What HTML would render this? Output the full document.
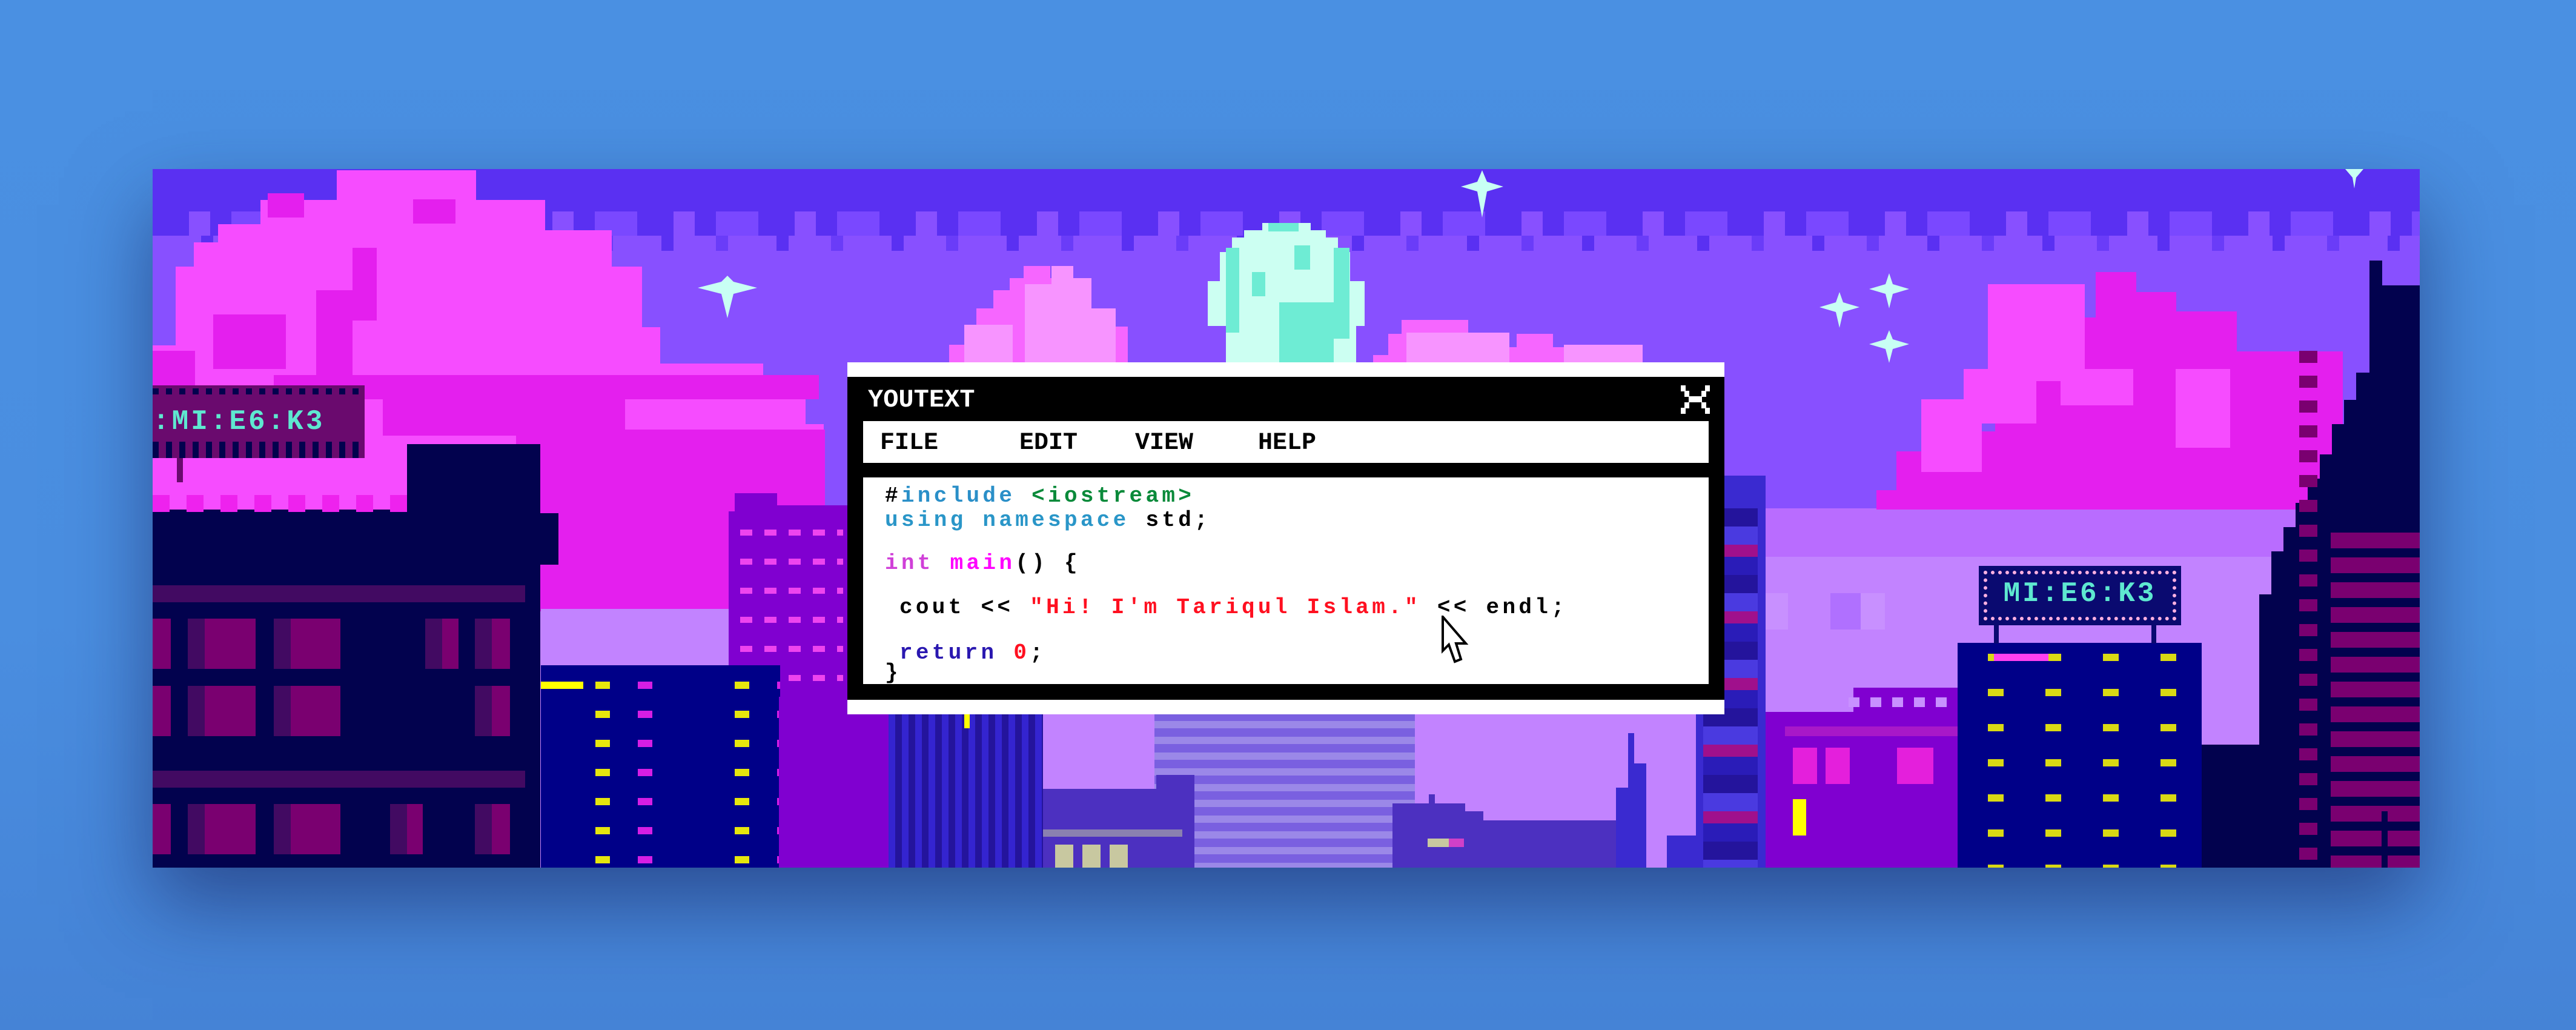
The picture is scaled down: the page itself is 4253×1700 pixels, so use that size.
<!DOCTYPE html>
<html><head><meta charset="utf-8">
<style>
*{margin:0;padding:0;box-sizing:border-box}
html,body{width:4253px;height:1700px;overflow:hidden}
body{position:relative;background:linear-gradient(180deg,#4a90e2 0%,#4a8ee0 60%,#4583d6 100%);font-family:"Liberation Mono",monospace}
.a{position:absolute}
#banner{left:252px;top:279px;width:3743px;height:1153px;overflow:hidden;
background:linear-gradient(180deg,#5a30f2 0 70px,#8850ff 70px 560px,#b96cff 560px 640px,#c283ff 640px);
box-shadow:0 60px 140px rgba(20,30,90,.55)}
.b{position:absolute}
.code{position:absolute;font-family:"Liberation Mono",monospace;font-size:36px;line-height:36px;letter-spacing:5.3px;white-space:pre;font-weight:bold;color:#000}
.menu{position:absolute;font-family:"Liberation Mono",monospace;font-size:40px;line-height:40px;font-weight:bold;color:#000}
</style></head><body>
<div id="banner" class="a">
<div class="b" style="left:0;top:70px;width:3743px;height:40px;background:repeating-linear-gradient(90deg,#5a30f2 0 60px,#8850ff 60px 95px,#5a30f2 95px 130px,#7a48ff 130px 200px)"></div>
<div class="b" style="left:0;top:110px;width:3743px;height:25px;background:repeating-linear-gradient(90deg,#8850ff 0 80px,#5a30f2 80px 100px,#8850ff 100px 170px,#6a3cf8 170px 190px)"></div>
<div class="b" style="left:1100px;top:700px;width:1800px;height:60px;background:repeating-linear-gradient(90deg,#c283ff 0 70px,#b070ff 70px 120px,#c890ff 120px 160px)"></div>

<div class="b" style="left:0;top:0;width:1200px;height:740px;background:#f64cff;clip-path:polygon(304px 2px,534px 2px,534px 51px,648px 51px,648px 101px,758px 101px,758px 161px,808px 161px,808px 261px,838px 261px,838px 321px,1008px 321px,1008px 361px,1078px 361px,1078px 421px,1108px 421px,1108px 726px,0 726px,0 291px,38px 291px,38px 161px,68px 161px,68px 121px,108px 121px,108px 91px,178px 91px,178px 51px,304px 51px)"></div>
<div class="b" style="left:270px;top:200px;width:60px;height:150px;background:#e41fee"></div>
<div class="b" style="left:190px;top:40px;width:60px;height:40px;background:#e41fee"></div>
<div class="b" style="left:430px;top:50px;width:70px;height:40px;background:#e41fee"></div>
<div class="b" style="left:330px;top:130px;width:40px;height:120px;background:#e41fee"></div>
<div class="b" style="left:100px;top:240px;width:120px;height:90px;background:#e41fee"></div>
<div class="b" style="left:200px;top:340px;width:900px;height:40px;background:#e41fee"></div>
<div class="b" style="left:380px;top:380px;width:400px;height:60px;background:#e41fee"></div>
<div class="b" style="left:600px;top:430px;width:510px;height:300px;background:#e41fee"></div>
<div class="b" style="left:0;top:300px;width:70px;height:110px;background:#e41fee"></div>
<div class="b" style="left:641px;top:726px;width:330px;height:93px;background:#c283ff"></div>

<div class="b" style="left:1300px;top:150px;width:500px;height:200px;background:#f666ff;clip-path:polygon(138px 10px,182px 10px,182px 30px,220px 30px,220px 50px,245px 50px,245px 80px,267px 80px,267px 110px,310px 110px,310px 200px,0 200px,0 180px,15px 180px,15px 140px,40px 140px,40px 110px,60px 110px,60px 80px,88px 80px,88px 50px,115px 50px,115px 30px,138px 30px)"></div>
<div class="b" style="left:1440px;top:160px;width:150px;height:200px;background:#f794ff;clip-path:polygon(44px 0,80px 0,80px 20px,110px 20px,110px 70px,150px 70px,150px 200px,0 200px,0 30px,44px 30px)"></div>
<div class="b" style="left:1340px;top:257px;width:80px;height:100px;background:#f794ff"></div>
<div class="b" style="left:1992px;top:227px;width:500px;height:130px;background:#f666ff;clip-path:polygon(0 100px,23px 100px,23px 80px,48px 80px,48px 45px,70px 45px,70px 22px,180px 22px,180px 45px,228px 45px,228px 67px,260px 67px,260px 45px,320px 45px,320px 67px,360px 67px,360px 100px,410px 100px,410px 130px,0 130px)"></div>
<div class="b" style="left:2070px;top:270px;width:170px;height:90px;background:#f794ff"></div>
<div class="b" style="left:2330px;top:290px;width:130px;height:70px;background:#f794ff"></div>

<!-- moon -->
<div class="b" style="left:1742px;top:89px;width:259px;height:230px;background:#ccfff2;clip-path:polygon(90px 0,170px 0,170px 12px,195px 12px,195px 24px,215px 24px,215px 48px,235px 48px,235px 96px,259px 96px,259px 170px,245px 170px,245px 230px,30px 230px,30px 170px,0 170px,0 96px,20px 96px,20px 48px,40px 48px,40px 24px,60px 24px,60px 12px,90px 12px)"></div>
<div class="b" style="left:1772px;top:130px;width:22px;height:140px;background:#6eecd4"></div>
<div class="b" style="left:1815px;top:170px;width:22px;height:40px;background:#6eecd4"></div>
<div class="b" style="left:1885px;top:126px;width:26px;height:40px;background:#6eecd4"></div>
<div class="b" style="left:1950px;top:130px;width:26px;height:150px;background:#6eecd4"></div>
<div class="b" style="left:1860px;top:220px;width:90px;height:100px;background:#6eecd4"></div>
<div class="b" style="left:1842px;top:89px;width:50px;height:14px;background:#6eecd4"></div>

<div class="b" style="left:2846px;top:170px;width:800px;height:400px;background:#e41fee;clip-path:polygon(0 392px,0 360px,33px 360px,33px 296px,98px 296px,98px 263px,196px 263px,196px 199px,264px 199px,264px 131px,327px 131px,327px 75px,362px 75px,362px 0,429px 0,429px 33px,495px 33px,495px 65px,595px 65px,595px 131px,629px 131px,629px 131px,770px 131px,770px 392px)"></div>
<div class="b" style="left:3030px;top:190px;width:160px;height:160px;background:#f64cff"></div>
<div class="b" style="left:2920px;top:380px;width:100px;height:120px;background:#f64cff"></div>
<div class="b" style="left:2990px;top:330px;width:120px;height:90px;background:#f64cff"></div>
<div class="b" style="left:3150px;top:330px;width:120px;height:60px;background:#f64cff"></div>
<div class="b" style="left:3340px;top:330px;width:90px;height:130px;background:#f64cff"></div>

<div class="b" style="left:3470px;top:140px;width:273px;height:1013px;background:#02024e;clip-path:polygon(8px 1013px,8px 562px,28px 562px,28px 491px,48px 491px,48px 451px,68px 451px,68px 411px,88px 411px,88px 371px,108px 371px,108px 331px,128px 331px,128px 281px,148px 281px,148px 241px,168px 241px,168px 196px,190px 196px,190px 11px,211px 11px,211px 52px,273px 52px,273px 1013px)"></div>
<div class="b" style="left:3596px;top:600px;width:147px;height:553px;background:repeating-linear-gradient(180deg,#7a0070 0 26px,transparent 26px 41px)"></div>
<div class="b" style="left:3544px;top:300px;width:30px;height:853px;background:repeating-linear-gradient(180deg,#7a0070 0 20px,transparent 20px 41px)"></div>
<div class="b" style="left:3680px;top:1060px;width:10px;height:93px;background:#02024e"></div>
<div class="b" style="left:3200px;top:950px;width:300px;height:203px;background:#02024e"></div>
<div class="b" style="left:3120px;top:1060px;width:120px;height:93px;background:#02024e"></div>

<div class="b" style="left:2663px;top:856px;width:330px;height:297px;background:#8000d0"></div>
<div class="b" style="left:2663px;top:856px;width:145px;height:40px;background:#c283ff"></div>
<div class="b" style="left:2695px;top:920px;width:300px;height:16px;background:#a818c8"></div>
<div class="b" style="left:2708px;top:955px;width:40px;height:60px;background:#e41fdc"></div>
<div class="b" style="left:2762px;top:955px;width:40px;height:60px;background:#e41fdc"></div>
<div class="b" style="left:2880px;top:955px;width:60px;height:60px;background:#e41fdc"></div>
<div class="b" style="left:2708px;top:1040px;width:22px;height:60px;background:#ffff00"></div>
<div class="b" style="left:2800px;top:872px;width:180px;height:16px;background:repeating-linear-gradient(90deg,#c890ff 0 18px,transparent 18px 36px)"></div>

<div class="b" style="left:2980px;top:782px;width:403px;height:371px;background:#000088"></div>
<div class="b" style="left:3015px;top:655px;width:334px;height:98px;background:#0a0a70;border:4px solid #0a0a70"></div>
<div class="b" style="left:3023px;top:663px;width:318px;height:82px;border:6px dotted #ffb0e0"></div>
<div class="b" style="left:3015px;top:676px;width:334px;height:50px;color:#5ee8d0;font-family:'Liberation Mono',monospace;font-weight:bold;font-size:46px;line-height:50px;text-align:center;letter-spacing:4px">MI:E6:K3</div>
<div class="b" style="left:3040px;top:753px;width:8px;height:30px;background:#0a0a70"></div>
<div class="b" style="left:3300px;top:753px;width:8px;height:30px;background:#0a0a70"></div>
<div class="b" style="left:3000px;top:800px;width:380px;height:353px;background:
repeating-linear-gradient(90deg,transparent 0 30px,#ffff00 30px 56px,transparent 56px 95px),
#000088;
-webkit-mask:repeating-linear-gradient(180deg,#000 0 12px,transparent 12px 58px);mask:repeating-linear-gradient(180deg,#000 0 12px,transparent 12px 58px);opacity:.85"></div>
<div class="b" style="left:3040px;top:800px;width:90px;height:12px;background:#ff40f0"></div>

<div class="b" style="left:0;top:357px;width:350px;height:120px;background:#6a0a6e"></div>
<div class="b" style="left:0;top:362px;width:350px;height:10px;background:repeating-linear-gradient(90deg,#02024e 0 10px,transparent 10px 22px)"></div>
<div class="b" style="left:0;top:392px;width:350px;height:50px;color:#5ee8d0;font-family:'Liberation Mono',monospace;font-weight:bold;font-size:46px;line-height:50px;letter-spacing:4px;white-space:nowrap">:MI:E6:K3</div>
<div class="b" style="left:0;top:450px;width:350px;height:27px;background:repeating-linear-gradient(90deg,#02024e 0 10px,transparent 10px 22px)"></div>
<div class="b" style="left:40px;top:477px;width:10px;height:40px;background:#6a0a6e"></div>
<div class="b" style="left:0;top:510px;width:640px;height:643px;background:#02024e;clip-path:polygon(0 52px,0 643px,640px 643px,640px 155px,670px 155px,670px 0,420px 0,420px 52px)"></div>
<div class="b" style="left:420px;top:454px;width:220px;height:60px;background:#02024e"></div>
<div class="b" style="left:640px;top:568px;width:30px;height:85px;background:#02024e"></div>
<div class="b" style="left:0;top:538px;width:420px;height:28px;background:repeating-linear-gradient(90deg,#ee22ee 0 28px,transparent 28px 56px)"></div>
<div class="b" style="left:0;top:687px;width:615px;height:28px;background:#420a62"></div>
<div class="b" style="left:0;top:993px;width:615px;height:28px;background:#420a62"></div>
<div class="b" style="left:0;top:742px;width:590px;height:83px;background:linear-gradient(90deg,#7a0070 0 30px,transparent 30px 58px,#420a62 58px 86px,#7a0070 86px 170px,transparent 170px 200px,#420a62 200px 228px,#7a0070 228px 310px,transparent 310px 450px,#420a62 450px 478px,#7a0070 478px 505px,transparent 505px 532px,#420a62 532px 560px,#7a0070 560px 590px)"></div>
<div class="b" style="left:0;top:853px;width:590px;height:83px;background:linear-gradient(90deg,#7a0070 0 30px,transparent 30px 58px,#420a62 58px 86px,#7a0070 86px 170px,transparent 170px 200px,#420a62 200px 228px,#7a0070 228px 310px,transparent 310px 532px,#420a62 532px 560px,#7a0070 560px 590px)"></div>
<div class="b" style="left:0;top:1048px;width:590px;height:83px;background:linear-gradient(90deg,#7a0070 0 30px,transparent 30px 58px,#420a62 58px 86px,#7a0070 86px 170px,transparent 170px 200px,#420a62 200px 228px,#7a0070 228px 310px,transparent 310px 392px,#420a62 392px 420px,#7a0070 420px 446px,transparent 446px 532px,#420a62 532px 560px,#7a0070 560px 590px)"></div>

<div class="b" style="left:951px;top:535px;width:200px;height:618px;background:#8000d0;clip-path:polygon(0 30px,10px 30px,10px 0,80px 0,80px 20px,200px 20px,200px 618px,0 618px)"></div>
<div class="b" style="left:970px;top:575px;width:170px;height:578px;background:repeating-linear-gradient(180deg,transparent 0 20px,#ee44ee 20px 30px,transparent 30px 48px);-webkit-mask:repeating-linear-gradient(90deg,#000 0 20px,transparent 20px 40px);mask:repeating-linear-gradient(90deg,#000 0 20px,transparent 20px 40px)"></div>
<div class="b" style="left:641px;top:819px;width:395px;height:334px;background:#000088"></div>
<div class="b" style="left:641px;top:846px;width:395px;height:307px;background:repeating-linear-gradient(90deg,transparent 0 90px,#ffff00 90px 114px,transparent 114px 160px,#ee22ee 160px 184px,transparent 184px 230px);-webkit-mask:repeating-linear-gradient(180deg,#000 0 12px,transparent 12px 48px);mask:repeating-linear-gradient(180deg,#000 0 12px,transparent 12px 48px);opacity:.9"></div>
<div class="b" style="left:641px;top:846px;width:70px;height:12px;background:#ffff00"></div>

<div class="b" style="left:1034px;top:871px;width:181px;height:282px;background:#8000d0"></div>
<div class="b" style="left:1215px;top:871px;width:255px;height:282px;background:repeating-linear-gradient(90deg,#3424d0 0 11px,#24149c 11px 22px)"></div>
<div class="b" style="left:1340px;top:893px;width:9px;height:30px;background:#ffff00"></div>
<div class="b" style="left:1495px;top:871px;width:170px;height:282px;background:#c283ff"></div>
<div class="b" style="left:1654px;top:871px;width:430px;height:282px;background:#9b88e8;background-image:repeating-linear-gradient(180deg,#7a60e0 0 14px,#9b88e8 14px 26px)"></div>
<div class="b" style="left:1470px;top:1000px;width:280px;height:153px;background:#4c30c0;clip-path:polygon(0 23px,187px 23px,187px 0,250px 0,250px 153px,0 153px)"></div>
<div class="b" style="left:1470px;top:1090px;width:230px;height:12px;background:#8a80b0"></div>
<div class="b" style="left:1490px;top:1115px;width:130px;height:38px;background:repeating-linear-gradient(90deg,#c8c8a0 0 30px,transparent 30px 45px)"></div>
<div class="b" style="left:2084px;top:871px;width:410px;height:282px;background:#c283ff"></div>
<div class="b" style="left:2047px;top:1032px;width:370px;height:121px;background:#4c30c0;clip-path:polygon(0 15px,60px 15px,60px 0,70px 0,70px 15px,120px 15px,120px 28px,150px 28px,150px 43px,370px 43px,370px 121px,0 121px)"></div>
<div class="b" style="left:2105px;top:1105px;width:35px;height:14px;background:#c8c8a0"></div>
<div class="b" style="left:2140px;top:1105px;width:25px;height:14px;background:#d040c8"></div>
<div class="b" style="left:2416px;top:871px;width:70px;height:282px;background:#3a2ad0;clip-path:polygon(20px 60px,30px 60px,30px 110px,50px 110px,50px 282px,0 282px,0 150px,20px 150px)"></div>
<div class="b" style="left:2490px;top:871px;width:173px;height:282px;background:#c283ff"></div>
<div class="b" style="left:2548px;top:506px;width:115px;height:647px;background:#3a2ad0"></div>
<div class="b" style="left:2560px;top:560px;width:90px;height:593px;background:repeating-linear-gradient(180deg,#24149c 0 30px,#4a3ae0 30px 60px,#a0108c 60px 80px,#2a1cb8 80px 110px)"></div>
<div class="b" style="left:2500px;top:1100px;width:60px;height:53px;background:#3a2ad0"></div>

<svg class="b" style="left:0;top:0" width="3743" height="1153" viewBox="0 0 3743 1153">
<g fill="#c8fff4">
<path d="M949 176 L959 186 L998 196 L959 206 L949 246 L939 206 L900 196 L939 186 Z"/>
<path d="M2195 2 L2203 21 L2230 29 L2203 37 L2195 80 L2187 37 L2160 29 L2187 21 Z"/>
<path d="M2785 203 L2791 220 L2818 228 L2791 236 L2785 262 L2779 236 L2752 228 L2779 220 Z"/>
<path d="M2867 172 L2873 190 L2900 198 L2873 206 L2867 230 L2861 206 L2834 198 L2861 190 Z"/>
<path d="M2867 266 L2873 281 L2900 289 L2873 297 L2867 320 L2861 297 L2834 289 L2861 281 Z"/>
<path d="M3620 0 L3650 0 L3638 14 L3635 32 L3632 14 Z"/>
</g>
</svg>
</div>

<div class="a" style="left:1399px;top:598px;width:1448px;height:581px;background:#fff"></div>
<div class="a" style="left:1399px;top:622px;width:1448px;height:533px;background:#000"></div>
<div class="a" style="left:1433px;top:639px;font-family:'Liberation Mono',monospace;font-weight:bold;font-size:42px;line-height:42px;color:#fff">YOUTEXT</div>
<svg class="a" style="left:2775px;top:636px" width="48" height="48" viewBox="0 0 48 48"><g fill="#fff">
<rect x="0" y="0" width="8" height="10"/><rect x="40" y="0" width="8" height="10"/>
<rect x="6" y="9" width="8" height="10"/><rect x="34" y="9" width="8" height="10"/>
<rect x="13" y="18" width="22" height="10"/>
<rect x="6" y="28" width="8" height="10"/><rect x="34" y="28" width="8" height="10"/>
<rect x="0" y="37" width="8" height="10"/><rect x="40" y="37" width="8" height="10"/></g></svg>
<div class="a" style="left:1425px;top:695px;width:1396px;height:69px;background:#fff"></div>
<div class="menu" style="left:1453px;top:712px">FILE</div>
<div class="menu" style="left:1683px;top:712px">EDIT</div>
<div class="menu" style="left:1874px;top:712px">VIEW</div>
<div class="menu" style="left:2077px;top:712px">HELP</div>
<div class="a" style="left:1425px;top:788px;width:1396px;height:341px;background:#fff"></div>
<div class="code" style="left:1461px;top:801px">#<span style="color:#2a8fc8">include</span> <span style="color:#0a8a3a">&lt;iostream&gt;</span></div>
<div class="code" style="left:1461px;top:841px"><span style="color:#2a96c8">using namespace</span> std;</div>
<div class="code" style="left:1461px;top:912px"><span style="color:#d040d8">int</span> <span style="color:#ff00ff">main</span>() {</div>
<div class="code" style="left:1485px;top:985px">cout &lt;&lt; <span style="color:#ff1020">"Hi! I'm Tariqul Islam."</span> &lt;&lt; endl;</div>
<div class="code" style="left:1485px;top:1060px"><span style="color:#2a18b0">return</span> <span style="color:#ff1020">0</span>;</div>
<div class="code" style="left:1461px;top:1093px">}</div>
<svg class="a" style="left:2380px;top:1016px" width="46" height="80" viewBox="0 0 46 80"><path d="M2 2 L2 58 L12 48 L22 76 L32 72 L24 46 L40 46 Z" fill="#fff" stroke="#000" stroke-width="4" stroke-linejoin="miter"/></svg>
</body></html>
